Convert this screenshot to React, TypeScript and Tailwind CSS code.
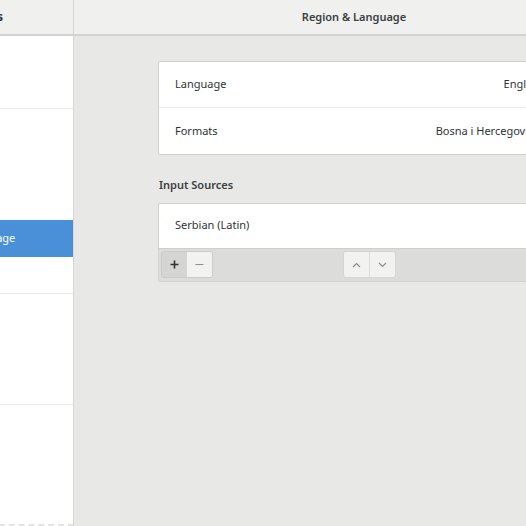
import React from "react";

const font = { fontFamily: '"Noto Sans", "Open Sans", sans-serif' };

const Sidebar = () => (
  <div className="w-[74px] shrink-0 overflow-hidden border-r border-[#d6d6d6] bg-white">
    <div className="-ml-[100px] w-[174px] flex flex-col h-full">
      <div className="h-[73px] border-b border-[#ececec]" />
      <div className="h-[111px]" />
      <div className="h-[37px] bg-[#4a90d9] text-white flex items-center pl-[14px] text-[11px]">
        Region &amp; Language
      </div>
      <div className="h-[37px] flex items-center pl-[14px] text-[11px] text-[#2e3436] border-b border-[#ececec]">
        Universal Access
      </div>
      <div className="h-[111px] border-b border-[#ececec]" />
      <div className="flex-1 border-b-2 border-dashed border-[#e4e4e4]" />
    </div>
  </div>
);

const Row = ({ label, value, last }: { label: string; value: string; last?: boolean }) => (
  <div className={`h-[46px] flex items-center justify-between px-4 text-[11px] text-[#2e3436] ${last ? "" : "border-b border-[#ececec]"}`}>
    <span>{label}</span>
    <span>{value}</span>
  </div>
);

const ToolBtn = ({ children, pressed }: { children: React.ReactNode; pressed?: boolean }) => (
  <div
    className={`w-[25px] h-[25px] flex items-center justify-center text-[#2e3436] ${
      pressed ? "bg-[#d5d5d4]" : "bg-[#f2f2f1]"
    }`}
  >
    {children}
  </div>
);

export default function App() {
  return (
    <div className="w-[526px] h-[526px] overflow-hidden flex flex-col bg-[#e8e8e7]" style={font}>
      <div className="h-[36px] shrink-0 flex bg-[#f0f0ef] border-b-2 border-[#d3d3d2]">
        <div className="w-[74px] shrink-0 border-r border-[#d3d3d2] flex items-center justify-end pr-[70px] overflow-hidden">
          <span className="text-[11.5px] font-bold text-[#2e3436] whitespace-nowrap">Settings</span>
        </div>
        <div className="flex-1 flex items-center justify-center pl-[108px]">
          <span className="text-[11px] font-semibold text-[#3b3f40]">Region &amp; Language</span>
        </div>
      </div>

      <div className="flex flex-1 min-h-0">
        <Sidebar />
        <div className="flex-1 overflow-hidden pl-[84px] pt-[25px]">
          <div className="w-[400px]">
            <div className="bg-white border border-[#d2d2d1] rounded-[2px]">
              <Row label="Language" value="English" />
              <Row label="Formats" value="Bosna i Hercegovina" last />
            </div>

            <div className="mt-[22px] mb-[9px] pl-[1px] text-[11px] font-semibold text-[#3b3f40]">Input Sources</div>

            <div className="border border-[#d2d2d1] rounded-[2px] overflow-hidden">
              <div className="h-[45px] bg-white flex items-center px-4 text-[11px] text-[#2e3436] border-b border-[#cfcfce]">
                Serbian (Latin)
              </div>
              <div className="h-[32px] bg-[#dcdcdb] flex items-center pl-[2px]">
                <div className="flex rounded-[3px] border border-[#cbcbca] overflow-hidden">
                  <ToolBtn pressed>
                    <svg width="9" height="9" viewBox="0 0 9 9">
                      <path d="M4.5 0.5v8M0.5 4.5h8" stroke="#2e3436" strokeWidth="1.6" />
                    </svg>
                  </ToolBtn>
                  <ToolBtn>
                    <svg width="9" height="9" viewBox="0 0 9 9">
                      <path d="M0.5 4.5h8" stroke="#8a8e8e" strokeWidth="1.2" />
                    </svg>
                  </ToolBtn>
                </div>
                <div className="ml-[130px] flex rounded-[3px] border border-[#d6d6d5] overflow-hidden">
                  <ToolBtn>
                    <svg width="9" height="6" viewBox="0 0 9 6">
                      <path d="M1 5l3.5-3.5L8 5" stroke="#8a8e8e" strokeWidth="1.2" fill="none" />
                    </svg>
                  </ToolBtn>
                  <div className="w-px bg-[#dcdcdb]" />
                  <ToolBtn>
                    <svg width="9" height="6" viewBox="0 0 9 6">
                      <path d="M1 1l3.5 3.5L8 1" stroke="#8a8e8e" strokeWidth="1.2" fill="none" />
                    </svg>
                  </ToolBtn>
                </div>
              </div>
            </div>
          </div>
        </div>
      </div>
    </div>
  );
}
